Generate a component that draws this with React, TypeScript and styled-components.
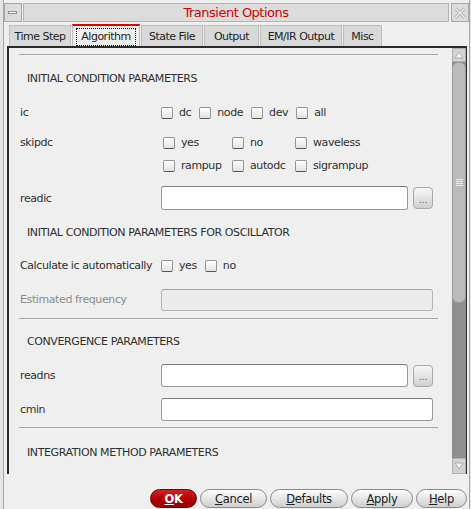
import React from 'react';
import styled, { createGlobalStyle } from 'styled-components';

const FONT = `"DejaVu Sans", "Liberation Sans", sans-serif`;

const GlobalStyle = createGlobalStyle`
  html, body {
    margin: 0;
    padding: 0;
    background: #efefef;
  }
  * {
    box-sizing: border-box;
  }
`;

const Window = styled.div`
  width: 471px;
  height: 509px;
  background: #efefef;
  border-left: 3px solid #e4e4e4;
  border-right: 1px solid #e4e4e4;
  font-family: ${FONT};
  color: #2f2f2f;
  letter-spacing: -0.4px;
  overflow: hidden;
`;

const Frame = styled.div`
  height: 100%;
  display: flex;
  flex-direction: column;
  border-left: 1px solid #a6a6a6;
  border-right: 1px solid #a6a6a6;
  padding-top: 3px;
`;

const TitleRow = styled.div`
  display: flex;
  height: 19px;
  gap: 1px;
`;

const FrameButton = styled.div<{ $w: number }>`
  width: ${(p) => p.$w}px;
  flex: none;
  border: 1px solid #a9a9a9;
  background: #dcdcdc;
  display: flex;
  align-items: center;
  justify-content: center;
`;

const TitleBar = styled.div`
  flex: 1;
  border: 1px solid #b4b4b4;
  background: #dcdcdc;
  color: #d40000;
  font-size: 13px;
  letter-spacing: -0.5px;
  display: flex;
  align-items: center;
  justify-content: center;
  margin-right: 1px;
`;

const MinGlyph = styled.div`
  width: 9px;
  height: 3px;
  border: 1px solid #8e8e8e;
  background: #fafafa;
  margin-right: 1px;
`;

const TabRow = styled.div`
  display: flex;
  align-items: flex-end;
  height: 23px;
  margin-top: 1px;
  padding-left: 5px;
  gap: 1px;
`;

const Tab = styled.div<{ $w: number; $active?: boolean }>`
  width: ${(p) => p.$w}px;
  height: ${(p) => (p.$active ? 22 : 21)}px;
  border: 1px solid #bdbdbd;
  border-bottom: none;
  border-top: ${(p) => (p.$active ? '2px solid #e00000' : '1px solid #bdbdbd')};
  background: ${(p) => (p.$active ? '#efefef' : '#d9d9d9')};
  font-size: 11px;
  letter-spacing: -0.5px;
  color: #222;
  display: flex;
  align-items: center;
  justify-content: center;
  padding-top: 1px;
`;

const FocusLabel = styled.span`
  border: 1px dotted #111;
  padding: 1px 4px 2px;
  line-height: 13px;
`;

const Panel = styled.div`
  display: flex;
  width: 460px;
  height: 428px;
  margin-left: 3px;
  border-top: 2px solid #2a2a2a;
  border-left: 2px solid #2a2a2a;
  border-right: 1px solid #2a2a2a;
`;

const Content = styled.div`
  flex: 1;
  overflow: hidden;
  padding: 6px 14px 0 10px;
  background: #efefef;
`;

const Separator = styled.div<{ $mt?: number }>`
  height: 1px;
  background: #a8a8a8;
  margin-top: ${(p) => p.$mt ?? 0}px;
`;

const SectionHeader = styled.div<{ $h: number }>`
  height: ${(p) => p.$h}px;
  display: flex;
  align-items: center;
  padding-left: 8px;
  font-size: 11px;
  color: #2f2f2f;
  white-space: nowrap;
`;

const FieldRow = styled.div<{ $h: number; $mt?: number }>`
  display: grid;
  grid-template-columns: 142px 1fr;
  align-items: center;
  height: ${(p) => p.$h}px;
  margin-top: ${(p) => p.$mt ?? 0}px;
  padding-right: 5px;
`;

const Label = styled.div<{ $disabled?: boolean; $top?: boolean }>`
  padding-left: 1px;
  font-size: 11px;
  color: ${(p) => (p.$disabled ? '#8c8c8c' : '#2f2f2f')};
  white-space: nowrap;
  align-self: ${(p) => (p.$top ? 'start' : 'center')};
  line-height: 23px;
`;

const CheckLine = styled.div`
  display: flex;
  align-items: center;
`;

const CheckGrid = styled.div`
  display: grid;
  grid-template-columns: 69px 63px auto;
  grid-auto-rows: 23px;
  align-items: center;
  padding-left: 2px;
`;

const Check = styled.label`
  display: inline-flex;
  align-items: center;
  margin-right: 8px;
  font-size: 11px;
  color: #2f2f2f;
  white-space: nowrap;
`;

const Box = styled.span`
  width: 12px;
  height: 12px;
  margin-right: 6px;
  border: 1px solid #969696;
  border-bottom-color: #555;
  border-radius: 2px;
  background: linear-gradient(#ffffff, #e2e2e2);
  flex: none;
`;

const InputLine = styled.div`
  display: flex;
  align-items: center;
  gap: 5px;
`;

const TextInput = styled.div<{ $h: number; $disabled?: boolean }>`
  flex: 1;
  height: ${(p) => p.$h}px;
  border: 1px solid ${(p) => (p.$disabled ? '#b4b4b4' : '#9a9a9a')};
  border-top-color: ${(p) => (p.$disabled ? '#a4a4a4' : '#7c7c7c')};
  border-radius: 3px;
  background: ${(p) => (p.$disabled ? '#ececec' : '#ffffff')};
`;

const BrowseButton = styled.div`
  width: 20px;
  height: 22px;
  flex: none;
  border: 1px solid #a9a9a9;
  border-radius: 4px;
  background: linear-gradient(#f6f6f6, #d0d0d0);
  font-size: 9px;
  letter-spacing: 0;
  color: #555;
  display: flex;
  align-items: center;
  justify-content: center;
  padding-top: 3px;
`;

const Scrollbar = styled.div`
  width: 14px;
  display: flex;
  flex-direction: column;
  background: #8e8e8e;
`;

const Arrow = styled.div<{ $h: number }>`
  height: ${(p) => p.$h}px;
  background: #d3d3d3;
  border: 1px solid #b0b0b0;
  display: flex;
  align-items: center;
  justify-content: center;
`;

const Thumb = styled.div`
  height: 241px;
  background: #bbbbbb;
  border: 1px solid #9a9a9a;
  border-radius: 6px;
  display: flex;
  align-items: center;
  justify-content: center;
`;

const Grip = styled.div`
  width: 7px;
  height: 7px;
  background: repeating-linear-gradient(#eaeaea 0 1px, transparent 1px 2px);
`;

const Track = styled.div`
  flex: 1;
`;

const ButtonBar = styled.div`
  flex: 1;
  display: flex;
  justify-content: flex-end;
  align-items: flex-start;
  gap: 3px;
  padding: 15px 2px 0 0;
`;

const DialogButton = styled.div<{ $w: number; $primary?: boolean }>`
  width: ${(p) => p.$w}px;
  height: 19px;
  border-radius: 10px;
  border: 1px solid ${(p) => (p.$primary ? '#700000' : '#8a8a8a')};
  background: ${(p) =>
    p.$primary
      ? 'linear-gradient(#d52222, #b00000 55%, #950000)'
      : 'linear-gradient(#fdfdfd, #e6e6e6 50%, #cfcfcf)'};
  color: ${(p) => (p.$primary ? '#ffffff' : '#222')};
  font-weight: ${(p) => (p.$primary ? 700 : 400)};
  font-size: 11.5px;
  letter-spacing: -0.3px;
  display: flex;
  align-items: center;
  justify-content: center;
`;

const tabs = [
  { label: 'Time Step', w: 62 },
  { label: 'Algorithm', w: 68, active: true },
  { label: 'State File', w: 62 },
  { label: 'Output', w: 55 },
  { label: 'EM/IR Output', w: 82 },
  { label: 'Misc', w: 39 },
];

const buttons = [
  { key: 'O', rest: 'K', w: 47, primary: true },
  { key: 'C', rest: 'ancel', w: 67 },
  { key: 'D', rest: 'efaults', w: 78 },
  { key: 'A', rest: 'pply', w: 62 },
  { key: 'H', rest: 'elp', w: 51 },
];

const Checkbox = ({ label }: { label: string }) => (
  <Check>
    <Box />
    {label}
  </Check>
);

const App: React.FC = () => {
  return (
    <Window>
      <GlobalStyle />
      <Frame>
        <TitleRow>
          <FrameButton $w={18}>
            <MinGlyph />
          </FrameButton>
          <TitleBar>Transient Options</TitleBar>
          <FrameButton $w={18}>
            <svg width="12" height="12" viewBox="0 0 12 12">
              <path
                d="M1.5 1.5 L10.5 10.5 M10.5 1.5 L1.5 10.5"
                stroke="#a8a8a8"
                strokeWidth="3"
                fill="none"
              />
              <path
                d="M1.5 1.5 L10.5 10.5 M10.5 1.5 L1.5 10.5"
                stroke="#f2f2f2"
                strokeWidth="1.2"
                fill="none"
              />
            </svg>
          </FrameButton>
        </TitleRow>

        <TabRow>
          {tabs.map((t) => (
            <Tab key={t.label} $w={t.w} $active={t.active}>
              {t.active ? <FocusLabel>{t.label}</FocusLabel> : t.label}
            </Tab>
          ))}
        </TabRow>

        <Panel>
          <Content>
            <Separator />
            <SectionHeader $h={46}>INITIAL CONDITION PARAMETERS</SectionHeader>

            <FieldRow $h={22}>
              <Label>ic</Label>
              <CheckLine>
                <Checkbox label="dc" />
                <Checkbox label="node" />
                <Checkbox label="dev" />
                <Checkbox label="all" />
              </CheckLine>
            </FieldRow>

            <FieldRow $h={46} $mt={8}>
              <Label $top>skipdc</Label>
              <CheckGrid>
                <Checkbox label="yes" />
                <Checkbox label="no" />
                <Checkbox label="waveless" />
                <Checkbox label="rampup" />
                <Checkbox label="autodc" />
                <Checkbox label="sigrampup" />
              </CheckGrid>
            </FieldRow>

            <FieldRow $h={24} $mt={9}>
              <Label>readic</Label>
              <InputLine>
                <TextInput $h={24} />
                <BrowseButton>...</BrowseButton>
              </InputLine>
            </FieldRow>

            <SectionHeader $h={44}>INITIAL CONDITION PARAMETERS FOR OSCILLATOR</SectionHeader>

            <FieldRow $h={22}>
              <Label>Calculate ic automatically</Label>
              <CheckLine>
                <Checkbox label="yes" />
                <Checkbox label="no" />
              </CheckLine>
            </FieldRow>

            <FieldRow $h={22} $mt={12}>
              <Label $disabled>Estimated frequency</Label>
              <TextInput $h={22} $disabled />
            </FieldRow>

            <Separator $mt={8} />
            <SectionHeader $h={45}>CONVERGENCE PARAMETERS</SectionHeader>

            <FieldRow $h={23}>
              <Label>readns</Label>
              <InputLine>
                <TextInput $h={23} />
                <BrowseButton>...</BrowseButton>
              </InputLine>
            </FieldRow>

            <FieldRow $h={23} $mt={11}>
              <Label>cmin</Label>
              <TextInput $h={23} />
            </FieldRow>

            <Separator $mt={6} />
            <SectionHeader $h={48}>INTEGRATION METHOD PARAMETERS</SectionHeader>
          </Content>

          <Scrollbar>
            <Arrow $h={14}>
              <svg width="10" height="8" viewBox="0 0 10 8">
                <path d="M1 7 L5 1 L9 7 Z" fill="#f4f4f4" stroke="#a0a0a0" strokeWidth="0.8" />
              </svg>
            </Arrow>
            <Thumb>
              <Grip />
            </Thumb>
            <Track />
            <Arrow $h={16}>
              <svg width="10" height="8" viewBox="0 0 10 8">
                <path d="M1 1 L5 7 L9 1 Z" fill="#f4f4f4" stroke="#a0a0a0" strokeWidth="0.8" />
              </svg>
            </Arrow>
          </Scrollbar>
        </Panel>

        <ButtonBar>
          {buttons.map((b) => (
            <DialogButton key={b.key} $w={b.w} $primary={b.primary}>
              <u>{b.key}</u>
              {b.rest}
            </DialogButton>
          ))}
        </ButtonBar>
      </Frame>
    </Window>
  );
};

export default App;
